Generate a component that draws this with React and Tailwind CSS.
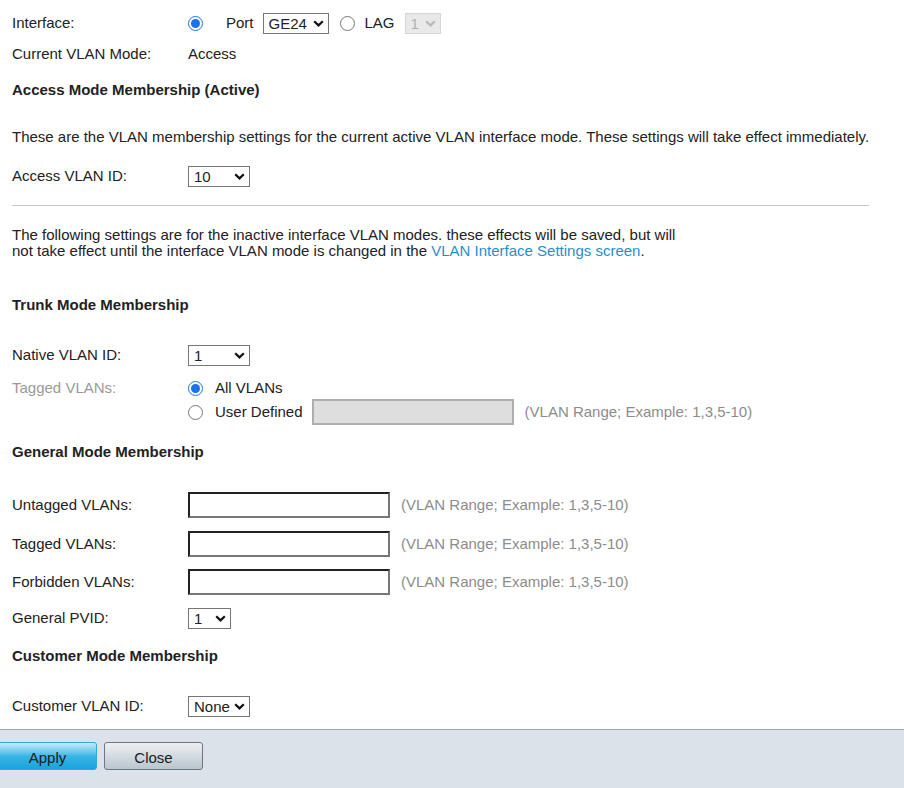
import React from "react";

const Sel = ({ value, w, disabled }) => (
  <span className="relative inline-flex" style={{ width: w }}>
    <select
      defaultValue={value}
      disabled={disabled}
      className={
        "appearance-none w-full h-[21px] border text-[15px] pl-[5px] leading-[19px] " +
        (disabled
          ? "border-[#d6d6d6] bg-[#e9e9e9] text-[#b0b0b0]"
          : "border-[#767676] bg-white text-[#222]")
      }
    >
      <option>{value}</option>
    </select>
    <svg
      width="11"
      height="7"
      viewBox="0 0 11 7"
      className="absolute right-[5px] top-[7px] pointer-events-none"
    >
      <path
        d="M1.2 1.2 L5.5 5.4 L9.8 1.2"
        fill="none"
        stroke={disabled ? "#b8b8b8" : "#111"}
        strokeWidth="2.2"
      />
    </svg>
  </span>
);

const Hint = ({ children }) => (
  <span className="text-[#8c8c8c]">{children}</span>
);

const TextIn = () => (
  <input
    type="text"
    className="w-[202px] h-[26px] border-2 border-t-[#222] border-l-[#222] border-r-[#777] border-b-[#777] bg-white"
  />
);

const Radio = ({ checked, name }) => (
  <input
    type="radio"
    defaultChecked={checked}
    name={name}
    className="w-[15px] h-[15px] m-0 accent-[#1a73e8]"
  />
);

export default function App() {
  return (
    <div
      className="w-[904px] h-[788px] bg-white text-[#222] text-[15px] overflow-hidden flex flex-col"
      style={{ fontFamily: '"Liberation Sans", Arial, sans-serif' }}
    >
      <div className="px-3 pt-[11px] w-[881px]">
        {/* Interface */}
        <div className="h-[24px] flex items-center">
          <div className="w-[176px]">Interface:</div>
          <Radio checked name="if" />
          <span className="ml-[23px]">Port</span>
          <span className="ml-[9px] flex">
            <Sel value="GE24" w="66px" />
          </span>
          <span className="ml-[11px] flex">
            <Radio name="if" />
          </span>
          <span className="ml-[10px]">LAG</span>
          <span className="ml-[10px] flex">
            <Sel value="1" w="36px" disabled />
          </span>
        </div>
        {/* Current mode */}
        <div className="h-[24px] mt-[7px] flex items-center">
          <div className="w-[176px]">Current VLAN Mode:</div>
          <div>Access</div>
        </div>
        <div className="h-[24px] mt-[12px] flex items-center font-bold">
          Access Mode Membership (Active)
        </div>
        <div className="h-[24px] mt-[23px] flex items-center whitespace-nowrap">
          These are the VLAN membership settings for the current active VLAN interface mode. These settings will take effect immediately.
        </div>
        <div className="h-[24px] mt-[15px] flex items-center">
          <div className="w-[176px]">Access VLAN ID:</div>
          <Sel value="10" w="62px" />
        </div>
        <div className="mt-[17px] border-t border-[#c4c8cc]" />
        <div className="mt-[21px] leading-[16px]">
          The following settings are for the inactive interface VLAN modes. these effects will be saved, but will
          <br />
          not take effect until the interface VLAN mode is changed in the{" "}
          <span className="text-[#1e8fd0]">VLAN Interface Settings screen</span>.
        </div>

        <div className="h-[24px] mt-[34px] flex items-center font-bold">
          Trunk Mode Membership
        </div>
        <div className="h-[24px] mt-[26px] flex items-center">
          <div className="w-[176px]">Native VLAN ID:</div>
          <Sel value="1" w="62px" />
        </div>
        <div className="h-[23px] mt-[10px] flex items-center">
          <div className="w-[176px] text-[#9a9a9a]">Tagged VLANs:</div>
          <Radio checked name="tg" />
          <span className="ml-[12px]">All VLANs</span>
        </div>
        <div className="h-[26px] -mt-[1px] flex items-center">
          <div className="w-[176px]" />
          <Radio name="tg" />
          <span className="ml-[12px]">User Defined</span>
          <input
            type="text"
            disabled
            className="ml-[9px] w-[202px] h-[26px] border-2 border-[#aeaeae] bg-[#dedede]"
          />
          <span className="ml-[11px]">
            <Hint>(VLAN Range; Example: 1,3,5-10)</Hint>
          </span>
        </div>

        <div className="h-[24px] mt-[15px] flex items-center font-bold">
          General Mode Membership
        </div>
        <div className="h-[26px] mt-[28px] flex items-center">
          <div className="w-[176px]">Untagged VLANs:</div>
          <TextIn />
          <span className="ml-[11px]">
            <Hint>(VLAN Range; Example: 1,3,5-10)</Hint>
          </span>
        </div>
        <div className="h-[26px] mt-[13px] flex items-center">
          <div className="w-[176px]">Tagged VLANs:</div>
          <TextIn />
          <span className="ml-[11px]">
            <Hint>(VLAN Range; Example: 1,3,5-10)</Hint>
          </span>
        </div>
        <div className="h-[26px] mt-[12px] flex items-center">
          <div className="w-[176px]">Forbidden VLANs:</div>
          <TextIn />
          <span className="ml-[11px]">
            <Hint>(VLAN Range; Example: 1,3,5-10)</Hint>
          </span>
        </div>
        <div className="h-[24px] mt-[11px] flex items-center">
          <div className="w-[176px]">General PVID:</div>
          <Sel value="1" w="43px" />
        </div>

        <div className="h-[24px] mt-[14px] flex items-center font-bold">
          Customer Mode Membership
        </div>
        <div className="h-[24px] mt-[26px] flex items-center">
          <div className="w-[176px]">Customer VLAN ID:</div>
          <Sel value="None" w="62px" />
        </div>
      </div>

      <div className="mt-[11px] flex-1 border-t border-[#9ea6ad] bg-[#dbe2e9] flex items-start pt-[12px] pl-0 gap-[7px]">
        <button className="-ml-[2px] w-[99px] h-[28px] rounded-[3px] border border-[#2ea7dc] bg-gradient-to-b from-[#c2ecfb] via-[#36b6e6] to-[#19a3dc] text-[15px] text-[#1a1a1a] leading-[28px] pt-[1px]">
          Apply
        </button>
        <button className="w-[99px] h-[28px] rounded-[3px] border border-[#6f777e] bg-gradient-to-b from-[#eef1f3] to-[#b9c5cd] text-[15px] text-[#1a1a1a] leading-[28px] pt-[1px]">
          Close
        </button>
      </div>
    </div>
  );
}
